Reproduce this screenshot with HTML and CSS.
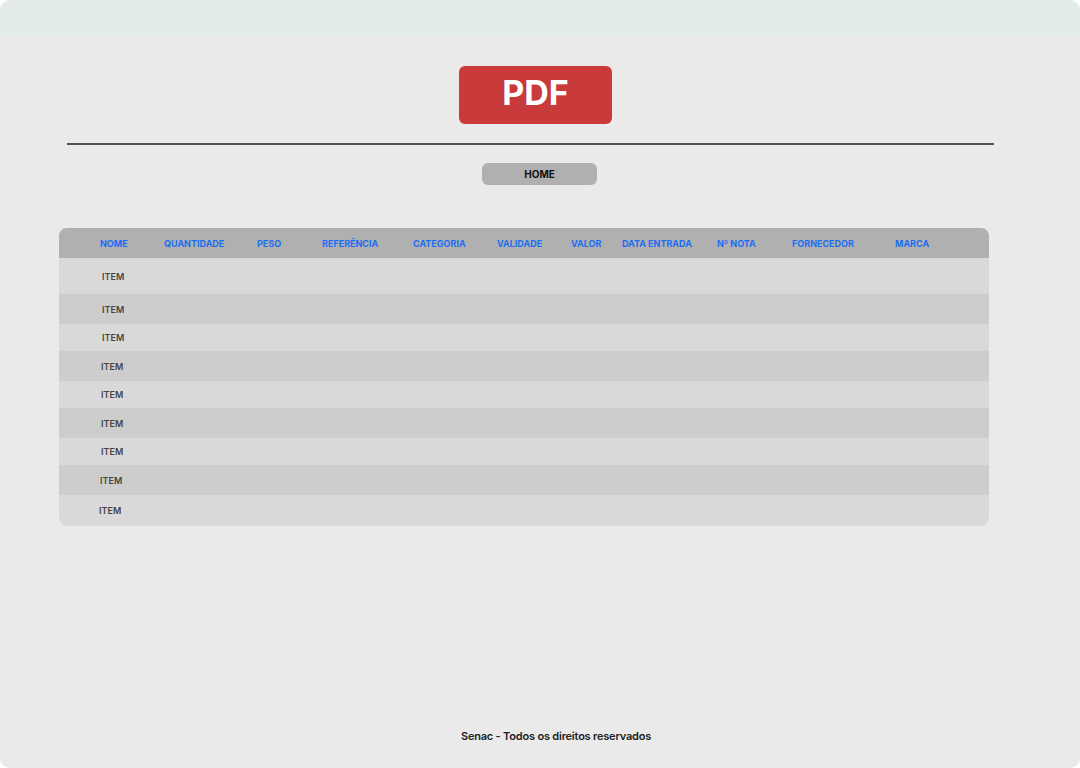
FILE: index.html
```html
<!DOCTYPE html>
<html lang="pt-BR">
<head>
<meta charset="utf-8">
<title>PDF</title>
<link rel="stylesheet" href="styles.css">
</head>
<body>
<div class="page">
  <div class="topbar"></div>
  <div class="pdf-btn">PDF</div>
  <div class="divider"></div>
  <div class="home-btn">HOME</div>
  <div class="table">
    <div class="row head">
      <span>NOME</span><span>QUANTIDADE</span><span>PESO</span><span>REFERÊNCIA</span><span>CATEGORIA</span><span>VALIDADE</span><span>VALOR</span><span>DATA ENTRADA</span><span>Nº NOTA</span><span>FORNECEDOR</span><span>MARCA</span>
    </div>
    <div class="row r1 tall"><span>ITEM</span></div>
    <div class="row r2"><span>ITEM</span></div>
    <div class="row r1 short"><span>ITEM</span></div>
    <div class="row r2"><span class="s1">ITEM</span></div>
    <div class="row r1 short"><span class="s1">ITEM</span></div>
    <div class="row r2"><span class="s1">ITEM</span></div>
    <div class="row r1 short"><span class="s1">ITEM</span></div>
    <div class="row r2"><span class="s2">ITEM</span></div>
    <div class="row r1 last"><span class="s3">ITEM</span></div>
  </div>
  <div class="footer">Senac - Todos os direitos reservados</div>
</div>
</body>
</html>
```
FILE: styles.css
```css
html, body {
  margin: 0;
  padding: 0;
  background: #ffffff;
}
body {
  font-family: Inter, "Noto Sans", sans-serif;
}
.page {
  width: 1080px;
  height: 768px;
  background: #eaeaea;
  border-radius: 10px;
  overflow: hidden;
  display: flex;
  flex-direction: column;
  align-items: flex-start;
}
.topbar {
  width: 100%;
  height: 36px;
  background: #e4ecea;
}
.pdf-btn {
  margin-top: 30px;
  margin-left: 459px;
  width: 153px;
  height: 58px;
  background: #c93a3a;
  border-radius: 6px;
  color: #ffffff;
  font-weight: 700;
  font-size: 34px;
  display: flex;
  align-items: center;
  justify-content: center;
  padding-bottom: 5px;
  box-sizing: border-box;
}
.divider {
  margin-top: 19px;
  margin-left: 67px;
  width: 927px;
  height: 2px;
  background: #505050;
}
.home-btn {
  margin-top: 18px;
  margin-left: 482px;
  width: 115px;
  height: 22px;
  background: #b0b0b0;
  border-radius: 6px;
  font-size: 10px;
  font-weight: 700;
  color: #111111;
  display: flex;
  align-items: center;
  justify-content: center;
}
.table {
  margin-top: 43px;
  margin-left: 59px;
  width: 930px;
  border-radius: 8px;
  overflow: hidden;
}
.row {
  display: grid;
  grid-template-columns: 64px 93px 65px 91px 84px 74px 51px 95px 75px 103px 1fr;
  align-items: center;
  padding-left: 41px;
  height: 30px;
  font-size: 9px;
  font-weight: 700;
}
.head {
  background: #b0b0b0;
  color: #1b6ef3;
}
.r1 { background: #d9d9d9; height: 27px; }
.r2 { background: #cdcdcd; height: 30px; }
.r1.tall { height: 36px; }
.r1.last { height: 31px; }
.row.r1 span, .row.r2 span {
  color: #444444;
  font-weight: 600;
  padding-left: 2px;
}
.row span.s1 { padding-left: 1px; }
.row span.s2 { padding-left: 0; }
.row span.s3 { padding-left: 0; margin-left: -1px; }
.footer {
  margin-top: auto;
  margin-bottom: 25px;
  align-self: stretch;
  text-align: center;
  padding-left: 32px;
  font-size: 11px;
  font-weight: 600;
  letter-spacing: -0.2px;
  color: #222222;
}
```
